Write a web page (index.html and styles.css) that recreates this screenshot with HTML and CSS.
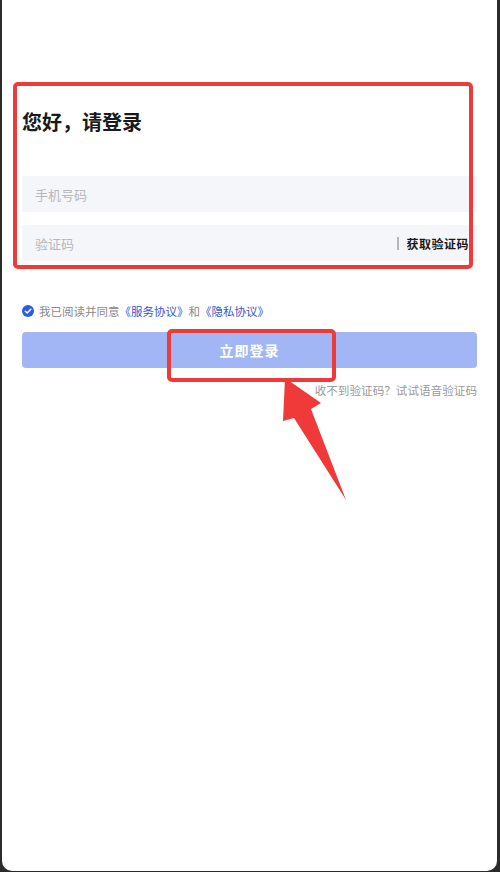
FILE: index.html
```html
<!DOCTYPE html>
<html lang="zh-CN">
<head>
  <meta charset="UTF-8">
  <meta name="viewport" content="width=device-width, initial-scale=1.0">
  <title>登录</title>
  <link rel="stylesheet" href="styles.css">
</head>
<body>
  <div class="screen">
    <h1 class="title">您好，请登录</h1>

    <div class="field">
      <input type="text" class="field-input" placeholder="手机号码">
    </div>
    <div class="field">
      <input type="text" class="field-input" placeholder="验证码">
      <span class="field-divider"></span>
      <span class="get-code">获取验证码</span>
    </div>

    <div class="agree">
      <span class="check">
        <svg width="12" height="12" viewBox="0 0 12 12">
          <circle cx="6" cy="6" r="6" fill="#2d5be3"/>
          <path d="M3.3 6.2 L5.2 8 L8.8 4.3" fill="none" stroke="#fff" stroke-width="1.5" stroke-linecap="round" stroke-linejoin="round"/>
        </svg>
      </span>
      <span>我已阅读并同意</span>
      <a class="link">《服务协议》</a>
      <span>和</span>
      <a class="link">《隐私协议》</a>
    </div>

    <button class="login-btn">立即登录</button>

    <p class="voice-hint">收不到验证码？试试语音验证码</p>

    <!-- annotation overlays -->
    <div class="mark mark-form"></div>
    <div class="mark mark-btn"></div>
    <svg class="arrow" width="500" height="872" viewBox="0 0 500 872">
      <polygon points="285,378 321,403 311,409 346,500 294,418 283,421" fill="#f03a3a"/>
    </svg>
  </div>
</body>
</html>
```

FILE: styles.css
```css
* {
  box-sizing: border-box;
}
body {
  font-family: "Noto Sans CJK SC", "Noto Sans", sans-serif;
  margin: 0;
  padding: 0;
  background-color: #2b2b2b;
}
.screen {
  position: relative;
  margin: 0 3px 0 2px;
  height: 871px;
  padding: 108px 20px 0 20px;
  background-color: #fff;
  border-radius: 0 0 10px 10px;
  overflow: hidden;
}
.title {
  margin: 0 0 40px 0;
  font-size: 20px;
  line-height: 28px;
  font-weight: 700;
  color: #1a1a1a;
}
.field {
  display: flex;
  align-items: center;
  height: 36px;
  margin-bottom: 13px;
  padding: 0 8px 0 13px;
  background-color: #f5f6f9;
}
.field-input {
  flex: 1;
  min-width: 0;
  border: none;
  outline: none;
  background: transparent;
  padding: 0;
  font-family: inherit;
  font-size: 13px;
  color: #333;
}
.field-input::placeholder {
  color: #b8b8bc;
}
.field-divider {
  width: 2px;
  height: 13px;
  margin-right: 7px;
  background-color: #b5b5b5;
}
.get-code {
  font-size: 12px;
  font-weight: 700;
  color: #1a1a1a;
  letter-spacing: 0.5px;
}
.agree {
  display: flex;
  align-items: center;
  margin-top: 41px;
  height: 18px;
  font-size: 11.5px;
  color: #8a8a8a;
}
.check {
  display: flex;
  margin-right: 5px;
}
.link {
  color: #3358cf;
}
.login-btn {
  display: block;
  width: 100%;
  height: 36px;
  margin-top: 12px;
  border: none;
  border-radius: 4px;
  background-color: #a2b6f6;
  color: #fff;
  font-family: inherit;
  font-size: 14px;
  font-weight: 700;
  letter-spacing: 1px;
}
.voice-hint {
  margin: 13px 0 0 0;
  text-align: right;
  font-size: 11.6px;
  line-height: 18px;
  color: #9a9a9a;
}
.mark {
  position: absolute;
  border: 4px solid #f03a3a;
  border-radius: 5px;
}
.mark-form {
  left: 11px;
  top: 82px;
  width: 460px;
  height: 187px;
}
.mark-btn {
  left: 165px;
  top: 329px;
  width: 169px;
  height: 53px;
}
.arrow {
  position: absolute;
  left: -2px;
  top: 0;
  pointer-events: none;
}
```
